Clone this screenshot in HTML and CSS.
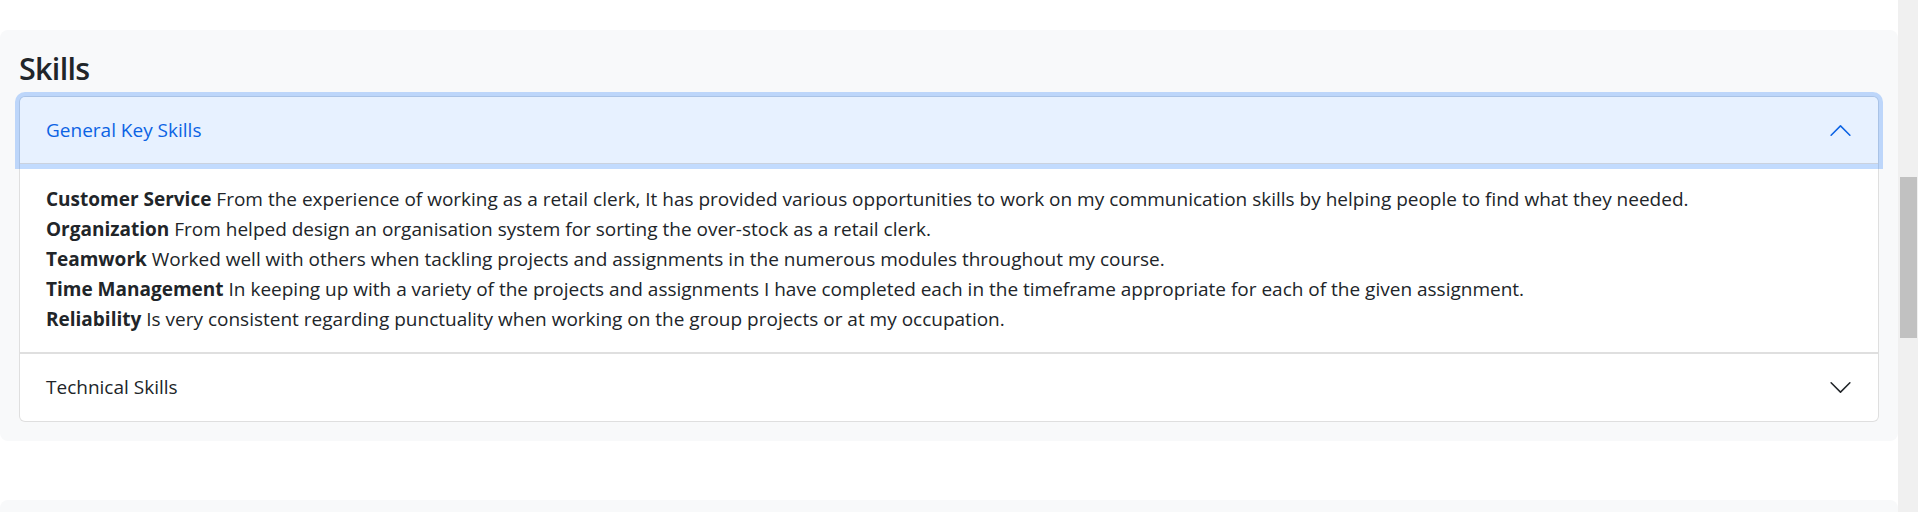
FILE: index.html
```html
<!DOCTYPE html>
<html lang="en">
<head>
<meta charset="utf-8">
<title>Skills</title>
<link rel="stylesheet" href="styles.css">
</head>
<body>
<div class="app">
  <main class="main">
    <section class="card">
      <h3 class="card-title">Skills</h3>
      <div class="accordion">
        <div class="acc-item">
          <div class="acc-button active">
            <span>General Key Skills</span>
            <svg class="chev up" viewBox="0 0 16 16" width="25" height="25"><path fill="currentColor" fill-rule="evenodd" d="M1.646 4.646a.5.5 0 0 1 .708 0L8 10.293l5.646-5.647a.5.5 0 0 1 .708.708l-6 6a.5.5 0 0 1-.708 0l-6-6a.5.5 0 0 1 0-.708z"/></svg>
          </div>
          <div class="acc-body">
            <div><strong>Customer Service</strong> From the experience of working as a retail clerk, It has provided various opportunities to work on my communication skills by helping people to find what they needed.</div>
            <div><strong>Organization</strong> From helped design an organisation system for sorting the over-stock as a retail clerk.</div>
            <div><strong>Teamwork</strong> Worked well with others when tackling projects and assignments in the numerous modules throughout my course.</div>
            <div><strong>Time Management</strong> In keeping up with a variety of the projects and assignments I have completed each in the timeframe appropriate for each of the given assignment.</div>
            <div><strong>Reliability</strong> Is very consistent regarding punctuality when working on the group projects or at my occupation.</div>
          </div>
        </div>
        <div class="acc-item last">
          <div class="acc-button">
            <span>Technical Skills</span>
            <svg class="chev" viewBox="0 0 16 16" width="25" height="25"><path fill="currentColor" fill-rule="evenodd" d="M1.646 4.646a.5.5 0 0 1 .708 0L8 10.293l5.646-5.647a.5.5 0 0 1 .708.708l-6 6a.5.5 0 0 1-.708 0l-6-6a.5.5 0 0 1 0-.708z"/></svg>
          </div>
        </div>
      </div>
    </section>
    <section class="card next"></section>
  </main>
  <div class="scrollbar"><div class="thumb"></div></div>
</div>
</body>
</html>
```
FILE: styles.css
```css
* { box-sizing: border-box; }
html, body { margin: 0; height: 100%; overflow: hidden; }
body {
  font-family: "Segoe UI", "Open Sans", sans-serif;
  color: #212529;
  background: #fff;
  font-size: 19px;
}
.app { display: flex; height: 512px; overflow: hidden; }
.main { flex: 1; padding-top: 30px; min-width: 0; }
.scrollbar { width: 20px; background: #f0f0f0; padding: 177px 1px 0 2px; }
.thumb { height: 161px; background: #c1c1c1; }

.card {
  background: #f8f9fa;
  border-radius: 8px;
  padding: 20px 19px 19px 19px;
}
.card.next { margin-top: 59px; height: 12px; padding: 0; border-radius: 8px 8px 0 0; }
.card-title {
  margin: 0 0 9px 0;
  font-size: 30.5px;
  font-weight: 600;
  letter-spacing: -0.7px;
  line-height: 37px;
}
.accordion { background: #fff; border-radius: 6px; }
.acc-item {
  border: 1px solid rgba(0,0,0,.125);
  border-radius: 6px 6px 0 0;
  background: #fff;
}
.acc-item.last { border-top: 0; border-radius: 0 0 6px 6px; }
.acc-button {
  display: flex;
  align-items: center;
  justify-content: space-between;
  padding: 19px 25px 19px 26px;
  line-height: 29px;
  color: #212529;
}
.acc-button.active {
  position: relative;
  color: #0c63e4;
  background: #e7f1ff;
  border-radius: 5px 5px 0 0;
  box-shadow: inset 0 -1px 0 rgba(0,0,0,.125), 0 0 0 5px rgba(13,110,253,.25);
  z-index: 2;
}
.chev { display: block; }
.chev.up { transform: rotate(180deg); }
.acc-body {
  padding: 20px 25px 18px 26px;
  line-height: 30px;
  border-bottom: 1px solid rgba(0,0,0,.125);
}
.acc-body strong { font-weight: 700; }
```
